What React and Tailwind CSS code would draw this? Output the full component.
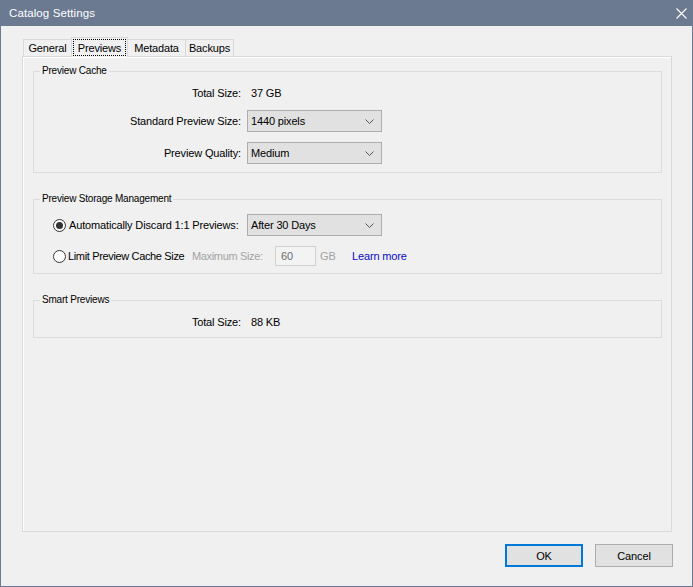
import React from "react";

function Chevron() {
  return (
    <svg width="9" height="5" viewBox="0 0 9 5" className="shrink-0">
      <path d="M0.5 0.5 L4.5 4.5 L8.5 0.5" stroke="#555" strokeWidth="1" fill="none" />
    </svg>
  );
}

function Select({ value }) {
  return (
    <div className="flex h-[22px] w-[135px] items-center justify-between border border-[#adadad] bg-[#e1e1e1] pl-[3px] pr-[7px]">
      <span>{value}</span>
      <Chevron />
    </div>
  );
}

function Radio({ checked }) {
  return (
    <div className="flex h-[13px] w-[13px] shrink-0 items-center justify-center rounded-full border border-[#333] bg-white">
      {checked && <div className="h-[7px] w-[7px] rounded-full bg-[#333]" />}
    </div>
  );
}

function Group({ title, children, extra }) {
  return (
    <div className={"relative w-[629px] border border-[#dcdcdc] " + extra}>
      <span className="absolute -top-[8px] left-[6px] bg-[#f0f0f0] px-[2px] text-[10px] leading-[14px] tracking-[-0.2px]">
        {title}
      </span>
      {children}
    </div>
  );
}

export default function App() {
  return (
    <div className="flex h-[587px] w-[693px] flex-col border border-t-0 border-[#6b7a91] bg-[#f0f0f0] font-['Liberation_Sans',Arial,sans-serif] text-[11px] leading-[14px] tracking-[-0.15px] text-black">
      {/* Title bar */}
      <div className="flex h-[26px] shrink-0 items-center justify-between bg-[#6b7a91] pl-[8px] pr-[5px] text-white">
        <span className="text-[11.5px] tracking-[0.1px]">Catalog Settings</span>
        <svg width="11" height="11" viewBox="0 0 11 11">
          <path d="M0.5 0.5 L10.5 10.5 M10.5 0.5 L0.5 10.5" stroke="white" strokeWidth="1.1" />
        </svg>
      </div>

      {/* Body */}
      <div className="flex flex-1 flex-col px-[21px] pt-[11px]">
        {/* Tabs */}
        <div className="relative z-10 flex h-[19px] items-end">
          <div className="ml-[1px] flex h-[17px] w-[48px] items-center justify-center border-l border-t border-[#d9d9d9]">
            General
          </div>
          <div className="-mb-px flex h-[20px] w-[57px] items-start justify-center border-x border-t border-[#d9d9d9] bg-[#f0f0f0] pt-[1px]">
            <span className="flex h-[17px] w-[53px] items-center justify-center border border-dotted border-black">
              Previews
            </span>
          </div>
          <div className="flex h-[17px] w-[57px] items-center justify-center border-t border-[#d9d9d9]">
            Metadata
          </div>
          <div className="flex h-[17px] w-[49px] items-center justify-center border-x border-t border-[#d9d9d9]">
            Backups
          </div>
        </div>

        {/* Panel */}
        <div className="h-[476px] w-[650px] border border-[#d9d9d9] pl-[10px] shadow-[inset_1px_1px_0_#ffffff]">
          <Group title="Preview Cache" extra="mt-[14px] pt-[10px] pb-[8px]">
            <div className="flex h-[22px] items-center">
              <span className="w-[207px] text-right">Total Size:</span>
              <span className="ml-[10px]">37 GB</span>
            </div>
            <div className="mt-[6px] flex h-[22px] items-center">
              <span className="w-[207px] text-right">Standard Preview Size:</span>
              <div className="ml-[6px]">
                <Select value="1440 pixels" />
              </div>
            </div>
            <div className="mt-[10px] flex h-[22px] items-center">
              <span className="w-[207px] text-right">Preview Quality:</span>
              <div className="ml-[6px]">
                <Select value="Medium" />
              </div>
            </div>
          </Group>

          <Group title="Preview Storage Management" extra="mt-[26px] pt-[14px] pb-[7px]">
            <div className="flex h-[22px] items-center">
              <div className="flex w-[207px] items-center pl-[19px]">
                <Radio checked />
                <span className="ml-[3px] whitespace-nowrap">Automatically Discard 1:1 Previews:</span>
              </div>
              <div className="ml-[6px]">
                <Select value="After 30 Days" />
              </div>
            </div>
            <div className="mt-[10px] flex h-[20px] items-center pl-[19px]">
              <Radio />
              <span className="ml-[2px] w-[122px] whitespace-nowrap tracking-[-0.35px]">Limit Preview Cache Size</span>
              <span className="ml-[2px] w-[81px] whitespace-nowrap tracking-[-0.35px] text-[#a3a3a3]">Maximum Size:</span>
              <div className="ml-[2px] flex h-[20px] w-[41px] items-center border border-[#d0d0d0] bg-[#f3f3f3] pl-[5px] text-[#6d6d6d]">
                60
              </div>
              <span className="ml-[4px] w-[14px] text-[#a3a3a3]">GB</span>
              <span className="ml-[18px] whitespace-nowrap text-[#0a0ac8]">Learn more</span>
            </div>
          </Group>

          <Group title="Smart Previews" extra="mt-[26px] pt-[13px] pb-[7px]">
            <div className="flex h-[16px] items-center">
              <span className="w-[207px] text-right">Total Size:</span>
              <span className="ml-[10px]">88 KB</span>
            </div>
          </Group>
        </div>

        {/* Buttons */}
        <div className="mr-[-2px] mt-[12px] flex justify-end gap-[12px]">
          <div className="flex h-[23px] w-[78px] items-center justify-center border-2 border-[#0078d7] bg-[#e1e1e1]">
            OK
          </div>
          <div className="flex h-[23px] w-[78px] items-center justify-center border border-[#adadad] bg-[#e1e1e1]">
            Cancel
          </div>
        </div>
      </div>
    </div>
  );
}
